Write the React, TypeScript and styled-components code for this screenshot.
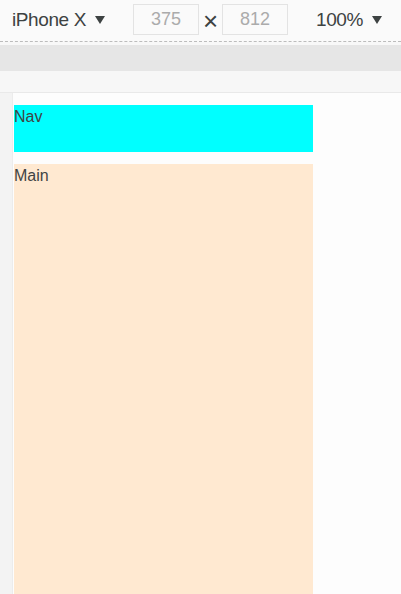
import React from "react";
import styled, { createGlobalStyle } from "styled-components";

const Global = createGlobalStyle`
  html, body { margin: 0; padding: 0; }
  body {
    width: 401px;
    height: 594px;
    overflow: hidden;
    background: #fafafa;
    font-family: "Liberation Sans", Arial, Helvetica, sans-serif;
  }
`;

const Frame = styled.div`
  display: flex;
  flex-direction: column;
  width: 401px;
  height: 594px;
  background: #f8f8f8;
`;

const Toolbar = styled.div`
  display: flex;
  align-items: center;
  height: 42px;
  padding: 0 0 0 12px;
  border-bottom: 1px dashed #bcbcbc;
  background: #fafafa;
  font-size: 19px;
  color: #3d4242;
  box-sizing: border-box;
`;

const Select = styled.div<{ $w: number }>`
  display: flex;
  align-items: center;
  width: ${(p) => p.$w}px;
  gap: 9px;
  letter-spacing: -0.4px;
  padding-bottom: 2px;
`;

const Caret = styled.span`
  display: inline-block;
  width: 0;
  height: 0;
  border-left: 5px solid transparent;
  border-right: 5px solid transparent;
  border-top: 8px solid #3d4242;
  margin-top: 1px;
`;

const SizeBox = styled.div`
  width: 66px;
  height: 31px;
  box-sizing: border-box;
  border: 1px solid #e3e3e3;
  display: flex;
  align-items: center;
  justify-content: center;
  color: #ababab;
  font-size: 18px;
  margin-bottom: 2px;
`;

const Times = styled.span`
  width: 23px;
  text-align: center;
  font-size: 26px;
  line-height: 26px;
  color: #3d4242;
  padding-top: 1px;
`;

const Spacer = styled.div<{ $w: number }>`
  width: ${(p) => p.$w}px;
`;

const GrayBar = styled.div`
  margin-top: 3px;
  height: 26px;
  background: #e6e6e6;
`;

const Band = styled.div`
  height: 21px;
  background: #f7f7f7;
  border-bottom: 1px solid #e9e9e9;
`;

const Viewport = styled.div`
  flex: 1;
  display: flex;
  min-height: 0;
`;

const Gutter = styled.div`
  width: 13px;
  background: #f3f3f3;
  border-right: 1px solid #ececec;
  box-sizing: border-box;
`;

const Page = styled.div`
  flex: 1;
  display: flex;
  flex-direction: column;
  gap: 12px;
  padding: 12px 0 0 1px;
  background: #fdfdfd;
  min-height: 0;
  font-size: 16px;
  color: #3f4444;
`;

const Block = styled.div<{ $bg: string; $h?: number }>`
  width: 299px;
  background: ${(p) => p.$bg};
  ${(p) => (p.$h ? `height: ${p.$h}px;` : "flex: 1;")}
  padding-top: 4px;
  box-sizing: border-box;
  line-height: 16px;
`;

export default function App() {
  return (
    <>
      <Global />
      <Frame>
        <Toolbar>
          <Select $w={121}>
            iPhone X <Caret />
          </Select>
          <SizeBox>375</SizeBox>
          <Times>×</Times>
          <SizeBox>812</SizeBox>
          <Spacer $w={28} />
          <Select $w={80}>
            100% <Caret />
          </Select>
        </Toolbar>
        <GrayBar />
        <Band />
        <Viewport>
          <Gutter />
          <Page>
            <Block $bg="#00ffff" $h={47}>Nav</Block>
            <Block $bg="#ffe9d1">Main</Block>
          </Page>
        </Viewport>
      </Frame>
    </>
  );
}
